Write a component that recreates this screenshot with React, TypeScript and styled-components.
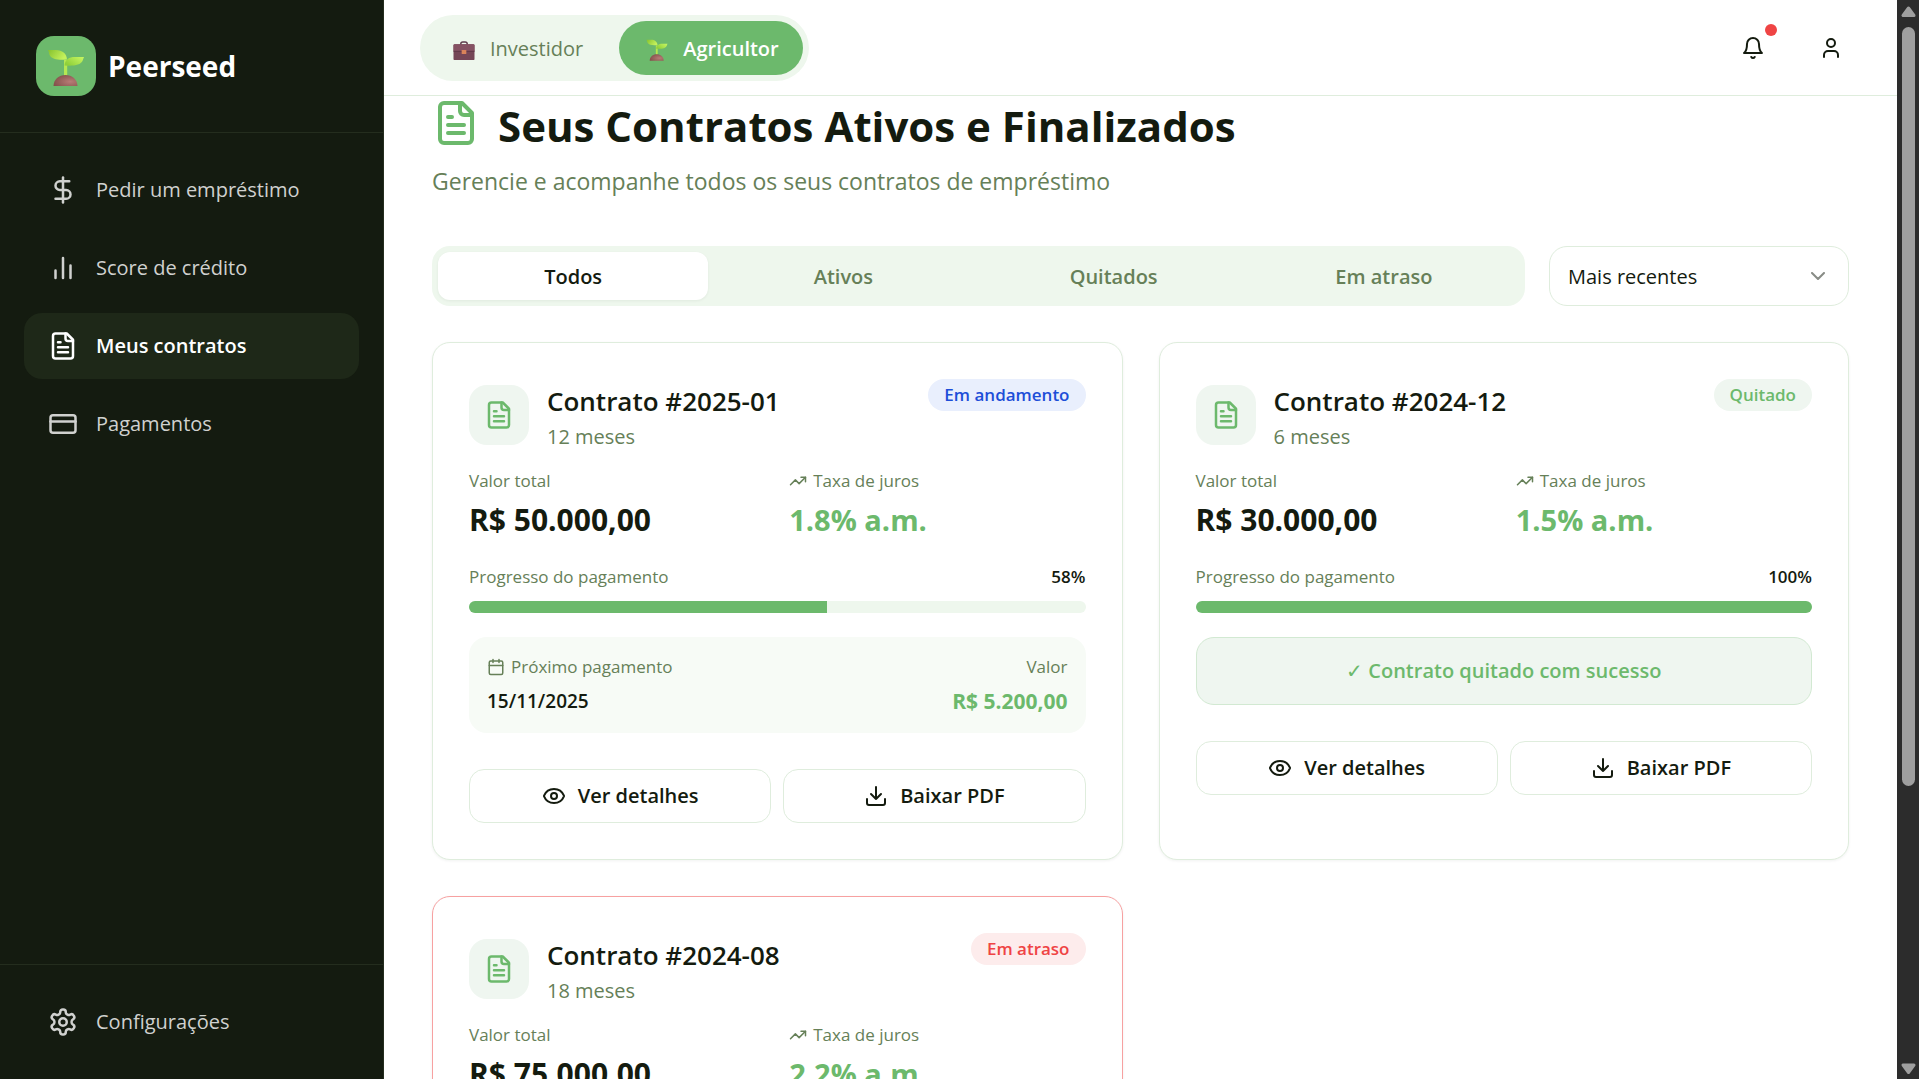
import React, { useState } from "react";
import styled, { createGlobalStyle, css } from "styled-components";

const color = {
  ink: "#141b0f",
  muted: "#668058",
  green: "#6cb96c",
  mint: "#eef7ed",
  mintPale: "#f7fbf6",
  mintGrey: "#eff6f0",
  line: "#dfeddd",
  sidebar: "#141b10",
  sidebarActive: "#1e2818",
  sidebarLine: "#242d1e",
  red: "#ef4444",
};

const GlobalStyle = createGlobalStyle`
  *, *::before, *::after { box-sizing: border-box; }
  body {
    margin: 0;
    background: #fff;
    color: ${color.ink};
    font-family: "Open Sans", "Noto Sans", sans-serif;
    font-size: 20px;
    line-height: 30px;
  }
  h1, h2, p, dl, dd, dt { margin: 0; font: inherit; }
  button, select { font: inherit; color: inherit; cursor: pointer; }
  svg { display: block; flex: none; }
`;

/* ---------- icons ---------- */

const Icon = ({ size = 24, children }: { size?: number; children: React.ReactNode }) => (
  <svg
    width={size}
    height={size}
    viewBox="0 0 24 24"
    fill="none"
    stroke="currentColor"
    strokeWidth="2"
    strokeLinecap="round"
    strokeLinejoin="round"
    aria-hidden="true"
  >
    {children}
  </svg>
);

type IconProps = { size?: number };

const DollarIcon = ({ size }: IconProps) => (
  <Icon size={size}>
    <path d="M12 2v20" />
    <path d="M17 5H9.5a3.5 3.5 0 0 0 0 7h5a3.5 3.5 0 0 1 0 7H6" />
  </Icon>
);
const BarsIcon = ({ size }: IconProps) => (
  <Icon size={size}>
    <path d="M18 20V10M12 20V4M6 20v-6" />
  </Icon>
);
const FileIcon = ({ size }: IconProps) => (
  <Icon size={size}>
    <path d="M15 2H6a2 2 0 0 0-2 2v16a2 2 0 0 0 2 2h12a2 2 0 0 0 2-2V7Z" />
    <path d="M14 2v4a2 2 0 0 0 2 2h4" />
    <path d="M10 9H8M16 13H8M16 17H8" />
  </Icon>
);
const CardIcon = ({ size }: IconProps) => (
  <Icon size={size}>
    <rect width="20" height="14" x="2" y="5" rx="2" />
    <path d="M2 10h20" />
  </Icon>
);
const GearIcon = ({ size }: IconProps) => (
  <Icon size={size}>
    <path d="M12.22 2h-.44a2 2 0 0 0-2 2v.18a2 2 0 0 1-1 1.73l-.43.25a2 2 0 0 1-2 0l-.15-.08a2 2 0 0 0-2.73.73l-.22.38a2 2 0 0 0 .73 2.73l.15.1a2 2 0 0 1 1 1.72v.51a2 2 0 0 1-1 1.74l-.15.09a2 2 0 0 0-.73 2.73l.22.38a2 2 0 0 0 2.73.73l.15-.08a2 2 0 0 1 2 0l.43.25a2 2 0 0 1 1 1.73V20a2 2 0 0 0 2 2h.44a2 2 0 0 0 2-2v-.18a2 2 0 0 1 1-1.73l.43-.25a2 2 0 0 1 2 0l.15.08a2 2 0 0 0 2.73-.73l.22-.39a2 2 0 0 0-.73-2.73l-.15-.08a2 2 0 0 1-1-1.74v-.5a2 2 0 0 1 1-1.74l.15-.09a2 2 0 0 0 .73-2.73l-.22-.38a2 2 0 0 0-2.73-.73l-.15.08a2 2 0 0 1-2 0l-.43-.25a2 2 0 0 1-1-1.73V4a2 2 0 0 0-2-2z" />
    <circle cx="12" cy="12" r="3" />
  </Icon>
);
const BellIcon = () => (
  <Icon>
    <path d="M6 8a6 6 0 0 1 12 0c0 7 3 9 3 9H3s3-2 3-9" />
    <path d="M10.3 21a1.94 1.94 0 0 0 3.4 0" />
  </Icon>
);
const UserIcon = () => (
  <Icon>
    <path d="M19 21v-2a4 4 0 0 0-4-4H9a4 4 0 0 0-4 4v2" />
    <circle cx="12" cy="7" r="4" />
  </Icon>
);
const ChevronIcon = () => (
  <Icon>
    <path d="m6 9 6 6 6-6" />
  </Icon>
);
const TrendIcon = () => (
  <Icon size={18}>
    <path d="m22 7-8.500 8.500-5-5L2 17" />
    <path d="M16 7h6v6" />
  </Icon>
);
const CalendarIcon = () => (
  <Icon size={18}>
    <path d="M8 2v4M16 2v4M3 10h18" />
    <rect width="18" height="18" x="3" y="4" rx="2" />
  </Icon>
);
const EyeIcon = () => (
  <Icon>
    <path d="M2.062 12.348a1 1 0 0 1 0-.696 10.750 10.750 0 0 1 19.876 0 1 1 0 0 1 0 .696 10.750 10.750 0 0 1-19.876 0" />
    <circle cx="12" cy="12" r="3" />
  </Icon>
);
const DownloadIcon = () => (
  <Icon>
    <path d="M21 15v4a2 2 0 0 1-2 2H5a2 2 0 0 1-2-2v-4" />
    <path d="m7 10 5 5 5-5M12 15V3" />
  </Icon>
);

const Seedling = ({ size, id }: { size: number; id: string }) => (
  <svg width={size} height={size} viewBox="-6 -8 48 48" aria-hidden="true">
    <defs>
      <linearGradient id={id + "l"} x1="0" y1="0" x2="1" y2="0.4">
        <stop offset="0" stopColor="#86c22e" />
        <stop offset="1" stopColor="#c4f15c" />
      </linearGradient>
      <linearGradient id={id + "r"} x1="0" y1="0.6" x2="1" y2="0">
        <stop offset="0" stopColor="#8fd03a" />
        <stop offset="1" stopColor="#c9f763" />
      </linearGradient>
      <radialGradient id={id + "s"} cx="0.7" cy="0.6" r="0.8">
        <stop offset="0" stopColor="#b87c76" />
        <stop offset="1" stopColor="#7e4d47" />
      </radialGradient>
    </defs>
    <path d="M16 10h3.200v16H16z" fill="#b5e853" />
    <path d="M0 0h8c6 0 10.800 3.400 11 9.500C11 10.200 3.500 9.500 1.600 5 .9 3.200 1 1.500 0 0Z" fill={`url(#${id}l)`} />
    <path d="M16.500 15.500C17 9.500 21 7 27 7h9c-.6 1.200-.8 2.400-1.400 3.800C32.500 15.500 25 16.200 16.500 15.500Z" fill={`url(#${id}r)`} />
    <path d="M5.500 36C5.500 29.500 11 25 17.500 25s12 4.500 12 11Z" fill={`url(#${id}s)`} />
  </svg>
);

const Briefcase = () => (
  <svg width="28" height="28" viewBox="-6 -8 48 48" aria-hidden="true">
    <path d="M12.500 9V7.500a3.500 3.500 0 0 1 3.500-3.500h4a3.500 3.500 0 0 1 3.500 3.500V9" fill="none" stroke="#5d3b4c" strokeWidth="2.500" />
    <rect x="0" y="8" width="36" height="27" rx="2" fill="#754657" />
    <path d="M0 10a2 2 0 0 1 2-2h32a2 2 0 0 1 2 2v10H0z" fill="#855263" />
    <path d="M0 20h36" stroke="#5b3546" strokeWidth="1.500" />
    <rect x="14" y="17.500" width="8" height="7" rx="1" fill="#d9835a" />
  </svg>
);

/* ---------- shell ---------- */

const Shell = styled.div`
  display: grid;
  grid-template-columns: 384px minmax(0, 1fr) 22px;
  height: 100vh;
  overflow: hidden;
`;

const Sidebar = styled.aside`
  display: flex;
  flex-direction: column;
  min-height: 0;
  background: ${color.sidebar};
  border-right: 1px solid ${color.sidebarLine};
`;

const Brand = styled.div`
  display: flex;
  align-items: center;
  gap: 12px;
  padding: 36px;
  border-bottom: 1px solid ${color.sidebarLine};
  color: #fff;
  font-size: 28px;
  font-weight: 700;
`;

const BrandMark = styled.span`
  display: grid;
  place-items: center;
  width: 60px;
  height: 60px;
  border-radius: 18px;
  background: ${color.green};
`;

const Nav = styled.nav`
  display: flex;
  flex-direction: column;
  gap: 12px;
  padding: 24px;
`;

const NavFooter = styled(Nav)`
  margin-top: auto;
  border-top: 1px solid ${color.sidebarLine};
`;

const NavLink = styled.a<{ $active?: boolean }>`
  display: flex;
  align-items: center;
  gap: 18px;
  height: 66px;
  padding: 0 24px;
  border-radius: 18px;
  color: #d0d1cf;
  text-decoration: none;
  ${(p) =>
    p.$active &&
    css`
      background: ${color.sidebarActive};
      color: #fff;
      font-weight: 600;
    `}
`;

const Main = styled.div`
  display: flex;
  flex-direction: column;
  min-width: 0;
  min-height: 0;
`;

const TopBar = styled.header`
  display: flex;
  align-items: center;
  justify-content: space-between;
  flex: none;
  height: 96px;
  padding: 0 36px;
  border-bottom: 1px solid ${color.line};
`;

const RoleSwitch = styled.div`
  display: flex;
  gap: 12px;
  padding: 6px;
  border-radius: 33px;
  background: ${color.mint};
`;

const RoleButton = styled.button<{ $active?: boolean }>`
  display: flex;
  align-items: center;
  gap: 12px;
  height: 54px;
  padding: 2px 24px 0;
  border: 0;
  border-radius: 27px;
  background: ${(p) => (p.$active ? color.green : "transparent")};
  color: ${(p) => (p.$active ? "#fff" : color.muted)};
  font-weight: ${(p) => (p.$active ? 600 : 400)};
`;

const TopActions = styled.div`
  display: flex;
  gap: 18px;
`;

const IconButton = styled.button`
  position: relative;
  display: grid;
  place-items: center;
  width: 60px;
  height: 60px;
  padding: 0;
  border: 0;
  border-radius: 18px;
  background: transparent;
`;

const AlertDot = styled.span`
  position: absolute;
  top: 6px;
  right: 6px;
  width: 12px;
  height: 12px;
  border-radius: 50%;
  background: ${color.red};
`;

const Content = styled.main`
  flex: 1;
  min-height: 0;
  overflow: hidden;
  padding: 0 48px;
`;

/* ---------- heading and filters ---------- */

const Title = styled.h1`
  display: flex;
  gap: 18px;
  font-size: 42px;
  font-weight: 700;
  line-height: 60px;
`;

const TitleIcon = styled.span`
  display: flex;
  align-items: center;
  height: 54px;
  color: ${color.green};
`;

const Subtitle = styled.p`
  margin-top: 8px;
  color: ${color.muted};
  font-size: 23px;
  line-height: 34px;
`;

const Filters = styled.div`
  display: flex;
  gap: 24px;
  margin: 48px 0 36px;
`;

const TabList = styled.div`
  display: grid;
  grid-template-columns: repeat(4, 1fr);
  flex: 1;
  padding: 6px;
  border-radius: 18px;
  background: ${color.mint};
`;

const Tab = styled.button<{ $active: boolean }>`
  height: 48px;
  padding: 2px 0 0;
  border: 0;
  border-radius: 12px;
  background: transparent;
  color: ${color.muted};
  font-weight: 600;
  ${(p) =>
    p.$active &&
    css`
      background: #fff;
      color: ${color.ink};
      box-shadow: 0 1px 3px rgba(20, 27, 15, 0.06);
    `}
`;

const SelectBox = styled.label`
  position: relative;
  display: block;
  width: 300px;
`;

const Select = styled.select`
  appearance: none;
  width: 100%;
  height: 60px;
  padding: 2px 48px 0 18px;
  border: 1px solid ${color.line};
  border-radius: 18px;
  background: #fff;
`;

const SelectArrow = styled.span`
  position: absolute;
  top: 18px;
  right: 19px;
  opacity: 0.5;
  pointer-events: none;
`;

/* ---------- contract card ---------- */

const Cards = styled.section`
  display: grid;
  grid-template-columns: repeat(2, minmax(0, 1fr));
  gap: 36px;
`;

const Card = styled.article<{ $late?: boolean }>`
  padding: 36px;
  border: 1px solid ${(p) => (p.$late ? "#f7a1a1" : color.line)};
  border-radius: 18px;
  background: #fff;
  box-shadow: 0 1px 3px rgba(20, 27, 15, 0.06);
`;

const CardHead = styled.header`
  display: flex;
  align-items: flex-start;
  justify-content: space-between;
`;

const CardIdentity = styled.div`
  display: flex;
  align-items: center;
  gap: 18px;
`;

const CardMark = styled.span`
  display: grid;
  place-items: center;
  width: 60px;
  height: 60px;
  border-radius: 18px;
  background: ${color.mintGrey};
  color: ${color.green};
`;

const CardTitle = styled.h2`
  font-size: 26px;
  font-weight: 600;
  line-height: 44px;
`;

const CardTerm = styled.p`
  color: ${color.muted};
  line-height: 28px;
`;

type Status = "andamento" | "quitado" | "atraso";

const badgeTone: Record<Status, [string, string]> = {
  andamento: ["#e9effd", "#1d4ed8"],
  quitado: [color.mintGrey, color.green],
  atraso: ["#fdecec", color.red],
};

const Badge = styled.span<{ $status: Status }>`
  padding: 4px 16px;
  border-radius: 16px;
  background: ${(p) => badgeTone[p.$status][0]};
  color: ${(p) => badgeTone[p.$status][1]};
  font-size: 17px;
  font-weight: 600;
  line-height: 24px;
`;

const Figures = styled.dl`
  display: grid;
  grid-template-columns: 1fr 1fr;
  gap: 24px;
  margin: 18px 0 24px;
`;

const Label = styled.dt`
  display: flex;
  align-items: center;
  gap: 6px;
  color: ${color.muted};
  font-size: 17px;
  line-height: 24px;
`;

const Figure = styled.dd<{ $accent?: boolean }>`
  margin-top: 6px;
  color: ${(p) => (p.$accent ? color.green : color.ink)};
  font-size: ${(p) => (p.$accent ? 29 : 30)}px;
  font-weight: 700;
  line-height: 42px;
`;

const ProgressHead = styled.div`
  display: flex;
  justify-content: space-between;
  margin-bottom: 12px;
  color: ${color.muted};
  font-size: 17px;
  line-height: 24px;
`;

const Percent = styled.span`
  color: ${color.ink};
  font-weight: 600;
`;

const Track = styled.div`
  height: 12px;
  overflow: hidden;
  border-radius: 6px;
  background: ${color.mint};
`;

const Fill = styled.div`
  height: 100%;
  background: ${color.green};
`;

const NextPayment = styled.dl`
  display: flex;
  justify-content: space-between;
  margin-top: 24px;
  padding: 18px;
  border-radius: 18px;
  background: ${color.mintPale};
`;

const PaymentValue = styled.dd<{ $accent?: boolean }>`
  margin-top: 8px;
  color: ${(p) => (p.$accent ? color.green : color.ink)};
  font-size: ${(p) => (p.$accent ? 21 : 19)}px;
  font-weight: ${(p) => (p.$accent ? 700 : 600)};
  line-height: 28px;
`;

const PaymentAmount = styled.div`
  display: flex;
  flex-direction: column;
  align-items: flex-end;
`;

const SettledNote = styled.p`
  margin-top: 24px;
  padding: 18px;
  border: 1px solid #d2e9d2;
  border-radius: 18px;
  background: ${color.mintGrey};
  color: ${color.green};
  font-weight: 600;
  text-align: center;
`;

const CheckMark = styled.span`
  font-weight: 400;
`;

const Actions = styled.div`
  display: grid;
  grid-template-columns: 1fr 1fr;
  gap: 12px;
  margin-top: 36px;
`;

const ActionButton = styled.button`
  display: flex;
  align-items: center;
  justify-content: center;
  gap: 12px;
  height: 54px;
  padding: 0;
  border: 1px solid ${color.line};
  border-radius: 15px;
  background: #fff;
  font-weight: 600;
`;

/* ---------- scrollbar ---------- */

const ScrollRail = styled.div`
  display: flex;
  flex-direction: column;
  min-height: 0;
  background: #2c2c2c;
  color: #9f9f9f;
`;

const ScrollTrack = styled.div`
  display: flex;
  flex: 1;
  justify-content: center;
`;

const ScrollThumb = styled.div`
  width: 13px;
  height: 74%;
  border-radius: 7px;
  background: currentColor;
`;

const ScrollArrow = ({ down }: { down?: boolean }) => (
  <svg width="22" height="27" viewBox="0 0 22 27" aria-hidden="true">
    <path
      d={down ? "M6 13h11l-5.500 7.500z" : "M6 15.500h11L11.500 8z"}
      fill="currentColor"
      stroke="currentColor"
      strokeWidth="3"
      strokeLinejoin="round"
    />
  </svg>
);

/* ---------- data ---------- */

type Contract = {
  id: string;
  term: string;
  status: Status;
  total: string;
  rate: string;
  progress: number;
  next?: { date: string; amount: string };
};

const statusLabel: Record<Status, string> = {
  andamento: "Em andamento",
  quitado: "Quitado",
  atraso: "Em atraso",
};

const contracts: Contract[] = [
  {
    id: "2025-01",
    term: "12 meses",
    status: "andamento",
    total: "R$ 50.000,00",
    rate: "1.8% a.m.",
    progress: 58,
    next: { date: "15/11/2025", amount: "R$ 5.200,00" },
  },
  {
    id: "2024-12",
    term: "6 meses",
    status: "quitado",
    total: "R$ 30.000,00",
    rate: "1.5% a.m.",
    progress: 100,
  },
  {
    id: "2024-08",
    term: "18 meses",
    status: "atraso",
    total: "R$ 75.000,00",
    rate: "2.2% a.m.",
    progress: 45,
  },
];

const tabs = ["Todos", "Ativos", "Quitados", "Em atraso"];

const ContractCard = ({ contract }: { contract: Contract }) => (
  <Card $late={contract.status === "atraso"}>
    <CardHead>
      <CardIdentity>
        <CardMark>
          <FileIcon size={30} />
        </CardMark>
        <div>
          <CardTitle>Contrato #{contract.id}</CardTitle>
          <CardTerm>{contract.term}</CardTerm>
        </div>
      </CardIdentity>
      <Badge $status={contract.status}>{statusLabel[contract.status]}</Badge>
    </CardHead>
    <Figures>
      <div>
        <Label>Valor total</Label>
        <Figure>{contract.total}</Figure>
      </div>
      <div>
        <Label>
          <TrendIcon />
          Taxa de juros
        </Label>
        <Figure $accent>{contract.rate}</Figure>
      </div>
    </Figures>
    <ProgressHead>
      <span>Progresso do pagamento</span>
      <Percent>{contract.progress}%</Percent>
    </ProgressHead>
    <Track
      role="progressbar"
      aria-label="Progresso do pagamento"
      aria-valuemin={0}
      aria-valuemax={100}
      aria-valuenow={contract.progress}
    >
      <Fill style={{ width: `${contract.progress}%` }} />
    </Track>
    {contract.next && (
      <NextPayment>
        <div>
          <Label>
            <CalendarIcon />
            Próximo pagamento
          </Label>
          <PaymentValue>{contract.next.date}</PaymentValue>
        </div>
        <PaymentAmount>
          <Label>Valor</Label>
          <PaymentValue $accent>{contract.next.amount}</PaymentValue>
        </PaymentAmount>
      </NextPayment>
    )}
    {contract.status === "quitado" && (
      <SettledNote>
        <CheckMark>✓</CheckMark> Contrato quitado com sucesso
      </SettledNote>
    )}
    <Actions>
      <ActionButton type="button">
        <EyeIcon />
        Ver detalhes
      </ActionButton>
      <ActionButton type="button">
        <DownloadIcon />
        Baixar PDF
      </ActionButton>
    </Actions>
  </Card>
);

export default function App() {
  const [tab, setTab] = useState(tabs[0]);

  return (
    <>
      <GlobalStyle />
      <Shell>
        <Sidebar>
          <Brand>
            <BrandMark>
              <Seedling size={48} id="brand" />
            </BrandMark>
            Peerseed
          </Brand>
          <Nav aria-label="Principal">
            <NavLink href="#emprestimo">
              <DollarIcon size={30} />
              Pedir um empréstimo
            </NavLink>
            <NavLink href="#score">
              <BarsIcon size={30} />
              Score de crédito
            </NavLink>
            <NavLink href="#contratos" $active aria-current="page">
              <FileIcon size={30} />
              Meus contratos
            </NavLink>
            <NavLink href="#pagamentos">
              <CardIcon size={30} />
              Pagamentos
            </NavLink>
          </Nav>
          <NavFooter aria-label="Conta">
            <NavLink href="#configuracoes">
              <GearIcon size={30} />
              Configurações
            </NavLink>
          </NavFooter>
        </Sidebar>

        <Main>
          <TopBar>
            <RoleSwitch>
              <RoleButton type="button">
                <Briefcase />
                Investidor
              </RoleButton>
              <RoleButton type="button" $active>
                <Seedling size={28} id="role" />
                Agricultor
              </RoleButton>
            </RoleSwitch>
            <TopActions>
              <IconButton type="button" aria-label="Notificações">
                <BellIcon />
                <AlertDot />
              </IconButton>
              <IconButton type="button" aria-label="Perfil">
                <UserIcon />
              </IconButton>
            </TopActions>
          </TopBar>

          <Content>
            <Title>
              <TitleIcon>
                <FileIcon size={48} />
              </TitleIcon>
              Seus Contratos Ativos e Finalizados
            </Title>
            <Subtitle>Gerencie e acompanhe todos os seus contratos de empréstimo</Subtitle>

            <Filters>
              <TabList role="tablist">
                {tabs.map((name) => (
                  <Tab
                    key={name}
                    type="button"
                    role="tab"
                    aria-selected={name === tab}
                    $active={name === tab}
                    onClick={() => setTab(name)}
                  >
                    {name}
                  </Tab>
                ))}
              </TabList>
              <SelectBox>
                <Select aria-label="Ordenar contratos" defaultValue="recentes">
                  <option value="recentes">Mais recentes</option>
                  <option value="antigos">Mais antigos</option>
                </Select>
                <SelectArrow>
                  <ChevronIcon />
                </SelectArrow>
              </SelectBox>
            </Filters>

            <Cards>
              {contracts.map((contract) => (
                <ContractCard key={contract.id} contract={contract} />
              ))}
            </Cards>
          </Content>
        </Main>

        <ScrollRail aria-hidden="true">
          <ScrollArrow />
          <ScrollTrack>
            <ScrollThumb />
          </ScrollTrack>
          <ScrollArrow down />
        </ScrollRail>
      </Shell>
    </>
  );
}
